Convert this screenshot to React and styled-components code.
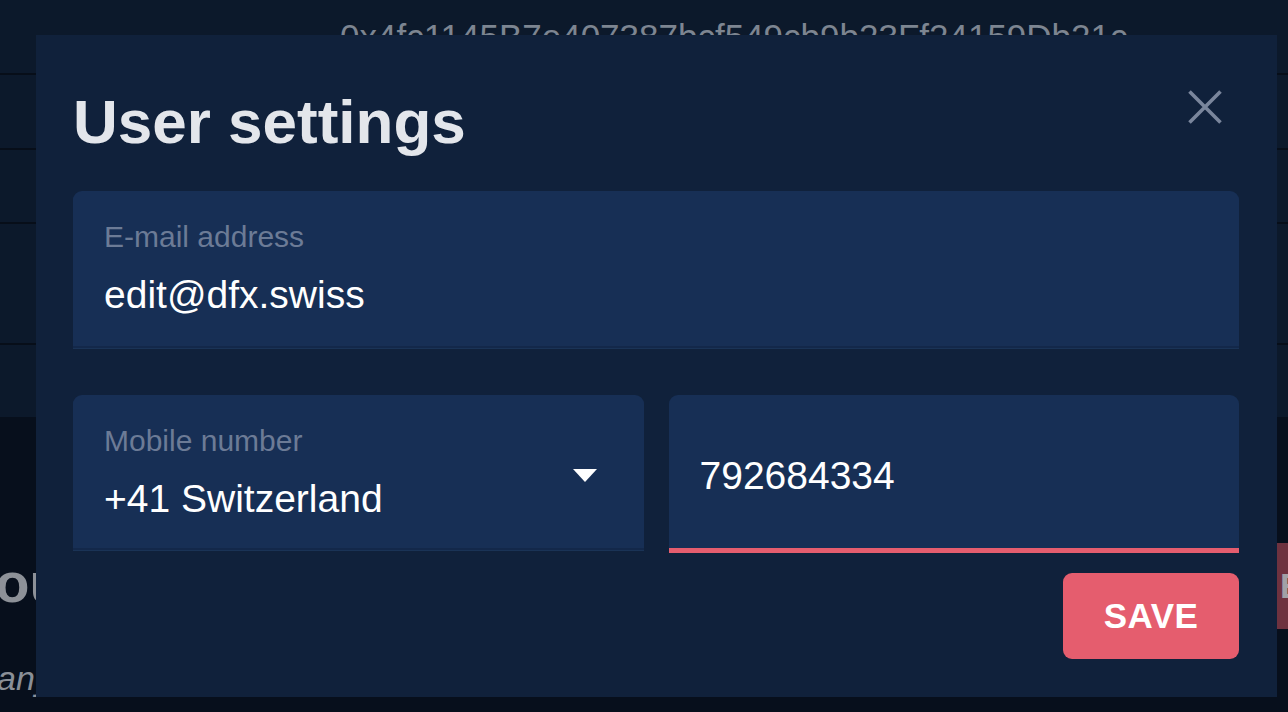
import React from "react";
import styled, { createGlobalStyle } from "styled-components";

const GlobalStyle = createGlobalStyle`
  html, body {
    margin: 0;
    padding: 0;
    background: #070f1c;
  }
  body {
    font-family: "Liberation Sans", Arial, Helvetica, sans-serif;
  }
  * { box-sizing: border-box; }
`;

const Page = styled.div`
  position: relative;
  width: 1288px;
  height: 712px;
  overflow: hidden;
  display: flex;
  flex-direction: column;
  background: #070f1c;
`;

const TopSection = styled.div`
  height: 417px;
  display: flex;
  flex-direction: column;
  background: #0c192b;
`;

const BgRow = styled.div`
  height: ${(p) => (p.$h ? `${p.$h}px` : "auto")};
  flex: ${(p) => (p.$h ? "none" : "1")};
  border-bottom: ${(p) => (p.$last ? "none" : "2px solid #070e19")};
`;

const AddressText = styled.div`
  padding: 17px 0 0 340px;
  font-size: 35px;
  line-height: 40px;
  color: #7d8591;
  white-space: nowrap;
`;

const BottomSection = styled.div`
  flex: 1;
  display: flex;
  justify-content: space-between;
  align-items: flex-start;
`;

const BgLeftCol = styled.div`
  padding-top: 134px;
  display: flex;
  flex-direction: column;
`;

const BgHeading = styled.div`
  margin-left: -38px;
  font-size: 56px;
  line-height: 64px;
  font-weight: 700;
  color: #8d9198;
  white-space: nowrap;
`;

const BgItalic = styled.div`
  margin: 43px 0 0 -3px;
  font-size: 34px;
  line-height: 40px;
  font-style: italic;
  color: #8a8f97;
  white-space: nowrap;
`;

const BgButton = styled.div`
  margin-top: 126px;
  margin-right: -168px;
  width: 200px;
  height: 86px;
  padding-left: 24px;
  display: flex;
  align-items: center;
  border-radius: 9px;
  background: #6e323f;
  color: #a2a1a6;
  font-size: 35px;
  font-weight: 700;
`;

const Modal = styled.div`
  position: absolute;
  top: 35px;
  left: 36px;
  width: 1241px;
  padding: 50px 38px 38px 37px;
  background: #10213b;
  display: flex;
  flex-direction: column;
`;

const Header = styled.div`
  display: flex;
  justify-content: space-between;
  align-items: flex-start;
`;

const Title = styled.h1`
  margin: 0;
  font-size: 62px;
  line-height: 74px;
  font-weight: 700;
  color: #e3e6eb;
`;

const CloseButton = styled.button`
  margin: 5px 17px 0 0;
  padding: 0;
  width: 34px;
  height: 34px;
  border: 0;
  background: none;
  color: #7a869c;
  display: flex;
`;

const Field = styled.div`
  height: ${(p) => p.$h}px;
  padding: ${(p) => p.$pt}px 30px 0 31px;
  background: #172f55;
  border-top-left-radius: 9px;
  border-top-right-radius: 9px;
  border-bottom: ${(p) => (p.$accent ? "5px solid #e55d6e" : "2px solid #13284a")};
  box-shadow: ${(p) => (p.$accent ? "none" : "0 1px 0 #1a3356")};
  display: flex;
  align-items: flex-start;
`;

const FieldBody = styled.div`
  display: flex;
  flex-direction: column;
  flex: 1;
`;

const FieldLabel = styled.div`
  margin-bottom: 17px;
  font-size: 30px;
  line-height: 36px;
  color: #6c7b96;
`;

const FieldValue = styled.div`
  font-size: 39px;
  line-height: 46px;
  color: #ffffff;
  white-space: nowrap;
`;

const Caret = styled.svg`
  flex: none;
  margin: 46px 17px 0 0;
`;

const EmailBlock = styled.div`
  margin-top: 32px;
`;

const PhoneGrid = styled.div`
  margin-top: 47px;
  display: grid;
  grid-template-columns: 1fr 1fr;
  column-gap: 25px;
  align-items: start;
`;

const Footer = styled.div`
  margin-top: 20px;
  display: flex;
  justify-content: flex-end;
`;

const SaveButton = styled.button`
  width: 176px;
  height: 86px;
  border: 0;
  border-radius: 9px;
  background: #e55d6e;
  color: #ffffff;
  font-family: inherit;
  font-size: 35px;
  font-weight: 700;
  letter-spacing: 0.5px;
  padding: 0;
`;

export default function App() {
  return (
    <>
      <GlobalStyle />
      <Page>
        <TopSection>
          <BgRow $h={75}>
            <AddressText>0x4fc1145B7e407387bcf549cb9b23Ff24159Db21c</AddressText>
          </BgRow>
          <BgRow $h={75} />
          <BgRow $h={74} />
          <BgRow $h={121} />
          <BgRow $last />
        </TopSection>
        <BottomSection>
          <BgLeftCol>
            <BgHeading>Your</BgHeading>
            <BgItalic>any</BgItalic>
          </BgLeftCol>
          <BgButton>EDIT</BgButton>
        </BottomSection>

        <Modal>
          <Header>
            <Title>User settings</Title>
            <CloseButton aria-label="Close">
              <svg width="34" height="34" viewBox="0 0 34 34">
                <path
                  d="M1.5 1.5 L32.5 32.5 M32.5 1.5 L1.5 32.5"
                  stroke="currentColor"
                  strokeWidth="3.6"
                  fill="none"
                />
              </svg>
            </CloseButton>
          </Header>

          <EmailBlock>
            <Field $h={157} $pt={28}>
              <FieldBody>
                <FieldLabel>E-mail address</FieldLabel>
                <FieldValue>edit@dfx.swiss</FieldValue>
              </FieldBody>
            </Field>
          </EmailBlock>

          <PhoneGrid>
            <Field $h={155} $pt={28}>
              <FieldBody>
                <FieldLabel>Mobile number</FieldLabel>
                <FieldValue>+41 Switzerland</FieldValue>
              </FieldBody>
              <Caret width="24" height="13" viewBox="0 0 24 13">
                <polygon points="0,0 24,0 12,13" fill="#ffffff" />
              </Caret>
            </Field>
            <Field $h={158} $pt={58} $accent>
              <FieldValue>792684334</FieldValue>
            </Field>
          </PhoneGrid>

          <Footer>
            <SaveButton>SAVE</SaveButton>
          </Footer>
        </Modal>
      </Page>
    </>
  );
}
